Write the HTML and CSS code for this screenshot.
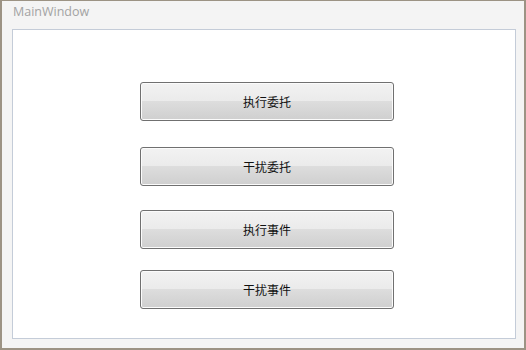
FILE: index.html
```html
<!DOCTYPE html>
<html>
<head>
<meta charset="utf-8">
<link rel="stylesheet" href="styles.css">
</head>
<body>
<div class="window">
  <div class="title">MainWindow</div>
  <div class="panel">
    <button class="btn b1">执行委托</button>
    <button class="btn b2">干扰委托</button>
    <button class="btn b3">执行事件</button>
    <button class="btn b4">干扰事件</button>
  </div>
</div>
</body>
</html>
```
FILE: styles.css
```css
html, body {
  margin: 0;
  padding: 0;
}
body {
  width: 526px;
  height: 350px;
  overflow: hidden;
  font-family: "Open Sans", "Noto Sans CJK SC", sans-serif;
}
.window {
  box-sizing: border-box;
  width: 526px;
  height: 350px;
  background: #f4f4f4;
  border-style: solid;
  border-color: #9c9384;
  border-width: 1px 2px 2px 2px;
  padding: 0 8px 9px 10px;
  display: flex;
  flex-direction: column;
}
.title {
  height: 28px;
  line-height: 21px;
  font-size: 12.5px;
  color: #a3a3a3;
  padding-left: 1px;
  font-family: "Open Sans", "Noto Sans CJK SC", sans-serif;
}
.panel {
  flex: 1;
  background: #fff;
  border: 1px solid #c4ccd8;
  display: flex;
  flex-direction: column;
  align-items: flex-start;
  padding-left: 127px;
}
.btn {
  box-sizing: border-box;
  width: 254px;
  height: 39px;
  border: 1px solid #707070;
  border-radius: 3px;
  background: linear-gradient(to bottom, #f2f2f2 0%, #ebebeb 48%, #dddddd 50%, #cfcfcf 100%);
  box-shadow: inset 0 0 0 1px #fbfbfb;
  font-family: "Noto Sans CJK SC", sans-serif;
  font-size: 12px;
  color: #111;
  padding: 0;
}
.b1 { margin-top: 52px; }
.b2 { margin-top: 26px; }
.b3 { margin-top: 24px; }
.b4 { margin-top: 21px; }
```
